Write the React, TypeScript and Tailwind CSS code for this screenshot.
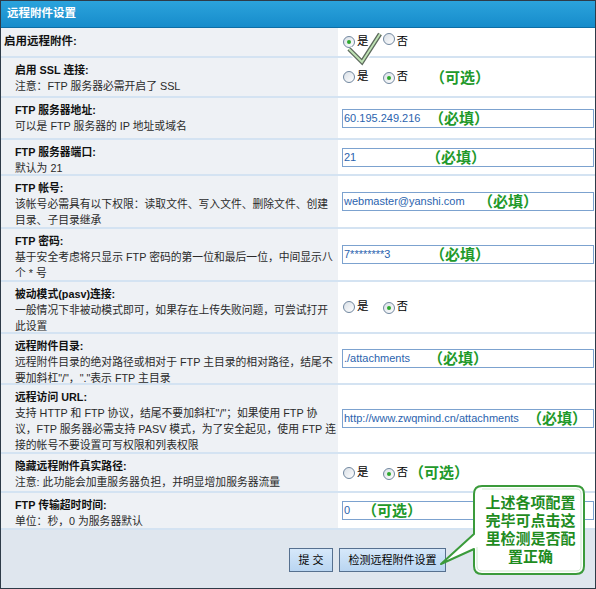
import type { ReactNode } from "react";

const font = "font-['Liberation_Sans','Noto_Sans_CJK_SC',sans-serif]";

function Radio({ on }: { on?: boolean }) {
  return (
    <span className="inline-flex h-[12px] w-[12px] items-center justify-center rounded-full border border-[#71879f] bg-gradient-to-br from-[#d9dfe6] to-white">
      {on && <span className="h-[4px] w-[4px] rounded-full bg-[#2ea82e]" />}
    </span>
  );
}

function YesNo({ yes, children }: { yes?: boolean; children?: ReactNode }) {
  return (
    <div className="flex items-center pl-[1px] text-[11.5px] text-black">
      <Radio on={yes} />
      <span className="ml-[2px]">是</span>
      <span className="ml-[14px]">
        <Radio on={!yes} />
      </span>
      <span className="ml-[2px]">否</span>
      {children}
    </div>
  );
}

function Hint({ text, className = "" }: { text: string; className?: string }) {
  return (
    <span className={`text-[15px] font-bold leading-none text-[#22992a] ${className}`}>
      {text}
    </span>
  );
}

function Field({ value, gap, hint }: { value: string; gap: string; hint: string }) {
  return (
    <div className="flex h-[19px] w-[252px] items-center border border-[#7ca2cf] bg-white pl-[1px]">
      <span className={`shrink-0 whitespace-nowrap text-[11px] text-[#2b63ae] ${gap}`}>{value}</span>
      <Hint text={hint} />
    </div>
  );
}

function Row({
  title,
  note,
  h,
  first,
  children,
}: {
  title: string;
  note?: string[];
  h: string;
  first?: boolean;
  children: ReactNode;
}) {
  return (
    <div className={`flex border-b-2 border-[#d4e3f2] ${h}`}>
      <div
        className={`w-[337px] shrink-0 bg-[#eef1f5] ${
          first ? "flex items-center pl-[3px]" : "pl-[14px] pt-[4px]"
        }`}
      >
        <div className={`font-bold text-[#111] ${first ? "text-[11.5px]" : "text-[10.8px] leading-[16px]"}`}>
          {title}
        </div>
        {note?.map((line) => (
          <div key={line} className="whitespace-nowrap text-[10.8px] leading-[16px] text-[#2a2a2a]">
            {line}
          </div>
        ))}
      </div>
      <div className="flex flex-1 items-center bg-white pl-[4px]">{children}</div>
    </div>
  );
}

export default function App() {
  return (
    <div className={`relative h-[589px] w-[596px] overflow-hidden border border-[#2e3b48] bg-white ${font}`}>
      <div className="flex h-[27px] items-center border-b border-[#0d6ea6] bg-gradient-to-b from-[#2ba3dc] to-[#168ccb] pl-[6px] text-[11.5px] font-bold text-white">
        远程附件设置
      </div>

      <Row title="启用远程附件:" h="h-[30px]" first>
        <YesNo yes />
      </Row>
      <Row title="启用 SSL 连接:" note={["注意：FTP 服务器必需开启了 SSL"]} h="h-[40px]">
        <YesNo>
          <Hint text="（可选）" className="ml-[22px]" />
        </YesNo>
      </Row>
      <Row title="FTP 服务器地址:" note={["可以是 FTP 服务器的 IP 地址或域名"]} h="h-[42px]">
        <Field value="60.195.249.216" gap="w-[85px]" hint="（必填）" />
      </Row>
      <Row title="FTP 服务器端口:" note={["默认为 21"]} h="h-[36px]">
        <Field value="21" gap="w-[82px]" hint="（必填）" />
      </Row>
      <Row
        title="FTP 帐号:"
        note={["该帐号必需具有以下权限：读取文件、写入文件、删除文件、创建", "目录、子目录继承"]}
        h="h-[53px]"
      >
        <Field value="webmaster@yanshi.com" gap="w-[134px]" hint="（必填）" />
      </Row>
      <Row
        title="FTP 密码:"
        note={["基于安全考虑将只显示 FTP 密码的第一位和最后一位，中间显示八", "个 * 号"]}
        h="h-[53px]"
      >
        <Field value="7********3" gap="w-[86px]" hint="（必填）" />
      </Row>
      <Row
        title="被动模式(pasv)连接:"
        note={["一般情况下非被动模式即可，如果存在上传失败问题，可尝试打开", "此设置"]}
        h="h-[52px]"
      >
        <YesNo />
      </Row>
      <Row
        title="远程附件目录:"
        note={["远程附件目录的绝对路径或相对于 FTP 主目录的相对路径，结尾不", "要加斜杠\"/\"，\".\"表示 FTP 主目录"]}
        h="h-[51px]"
      >
        <Field value="./attachments" gap="w-[84px]" hint="（必填）" />
      </Row>
      <Row
        title="远程访问 URL:"
        note={[
          "支持 HTTP 和 FTP 协议，结尾不要加斜杠\"/\"；如果使用 FTP 协",
          "议，FTP 服务器必需支持 PASV 模式，为了安全起见，使用 FTP 连",
          "接的帐号不要设置可写权限和列表权限",
        ]}
        h="h-[69px]"
      >
        <Field value="http://www.zwqmind.cn/attachments" gap="w-[183px]" hint="（必填）" />
      </Row>
      <Row title="隐藏远程附件真实路径:" note={["注意: 此功能会加重服务器负担，并明显增加服务器流量"]} h="h-[39px]">
        <YesNo>
          <Hint text="（可选）" className="ml-[1px]" />
        </YesNo>
      </Row>
      <Row title="FTP 传输超时时间:" note={["单位：秒，0 为服务器默认"]} h="h-[37px]">
        <Field value="0" gap="w-[18px]" hint="（可选）" />
      </Row>

      {/* footer buttons */}
      <div className="flex h-[60px] gap-[6px] bg-[#dfe6ee] pl-[288px] pt-[18px]">
        <button className="h-[24px] w-[44px] border border-[#56708f] bg-gradient-to-b from-[#d6e8fa] to-[#b9d5f1] text-[11px] text-black">
          提 交
        </button>
        <button className="h-[24px] w-[107px] border border-[#56708f] bg-gradient-to-b from-[#d6e8fa] to-[#b9d5f1] text-[11px] text-black">
          检测远程附件设置
        </button>
      </div>

      {/* tick over the first radio pair */}
      <svg className="absolute left-[344px] top-[30px]" width="40" height="36" viewBox="0 0 40 36">
        <polyline points="4,18 17,31 35,3" fill="none" stroke="#ffffff" strokeWidth="7" strokeLinejoin="miter" />
        <polyline points="4,18 17,31 35,3" fill="none" stroke="#5e6b5e" strokeWidth="4.5" strokeLinejoin="miter" />
        <polyline points="4,18 17,31 35,3" fill="none" stroke="#bfe3b4" strokeWidth="1.8" strokeLinejoin="miter" />
      </svg>

      {/* callout bubble pointing at the test button */}
      <svg className="absolute left-[435px] top-[483px]" width="152" height="94" viewBox="0 0 152 94">
        <path
          d="M46 2 H140 Q148 2 148 10 V82 Q148 90 140 90 H46 Q38 90 38 82 V65 L5 80 L38 50 V10 Q38 2 46 2 Z"
          fill="#ffffff"
          stroke="#3b9b3b"
          strokeWidth="2"
          strokeLinejoin="round"
        />
        <path
          d="M46 5 H140 Q145 5 145 10 V82 Q145 87 140 87 H46 Q41 87 41 82 V63"
          fill="none"
          stroke="#cfe9cf"
          strokeWidth="1"
        />
      </svg>
      <div className="absolute left-[474px] top-[485px] flex h-[88px] w-[111px] flex-col items-center justify-center text-[15px] font-bold leading-[18px] text-[#1f8c1f]">
        <div>上述各项配置</div>
        <div>完毕可点击这</div>
        <div>里检测是否配</div>
        <div>置正确</div>
      </div>
    </div>
  );
}
